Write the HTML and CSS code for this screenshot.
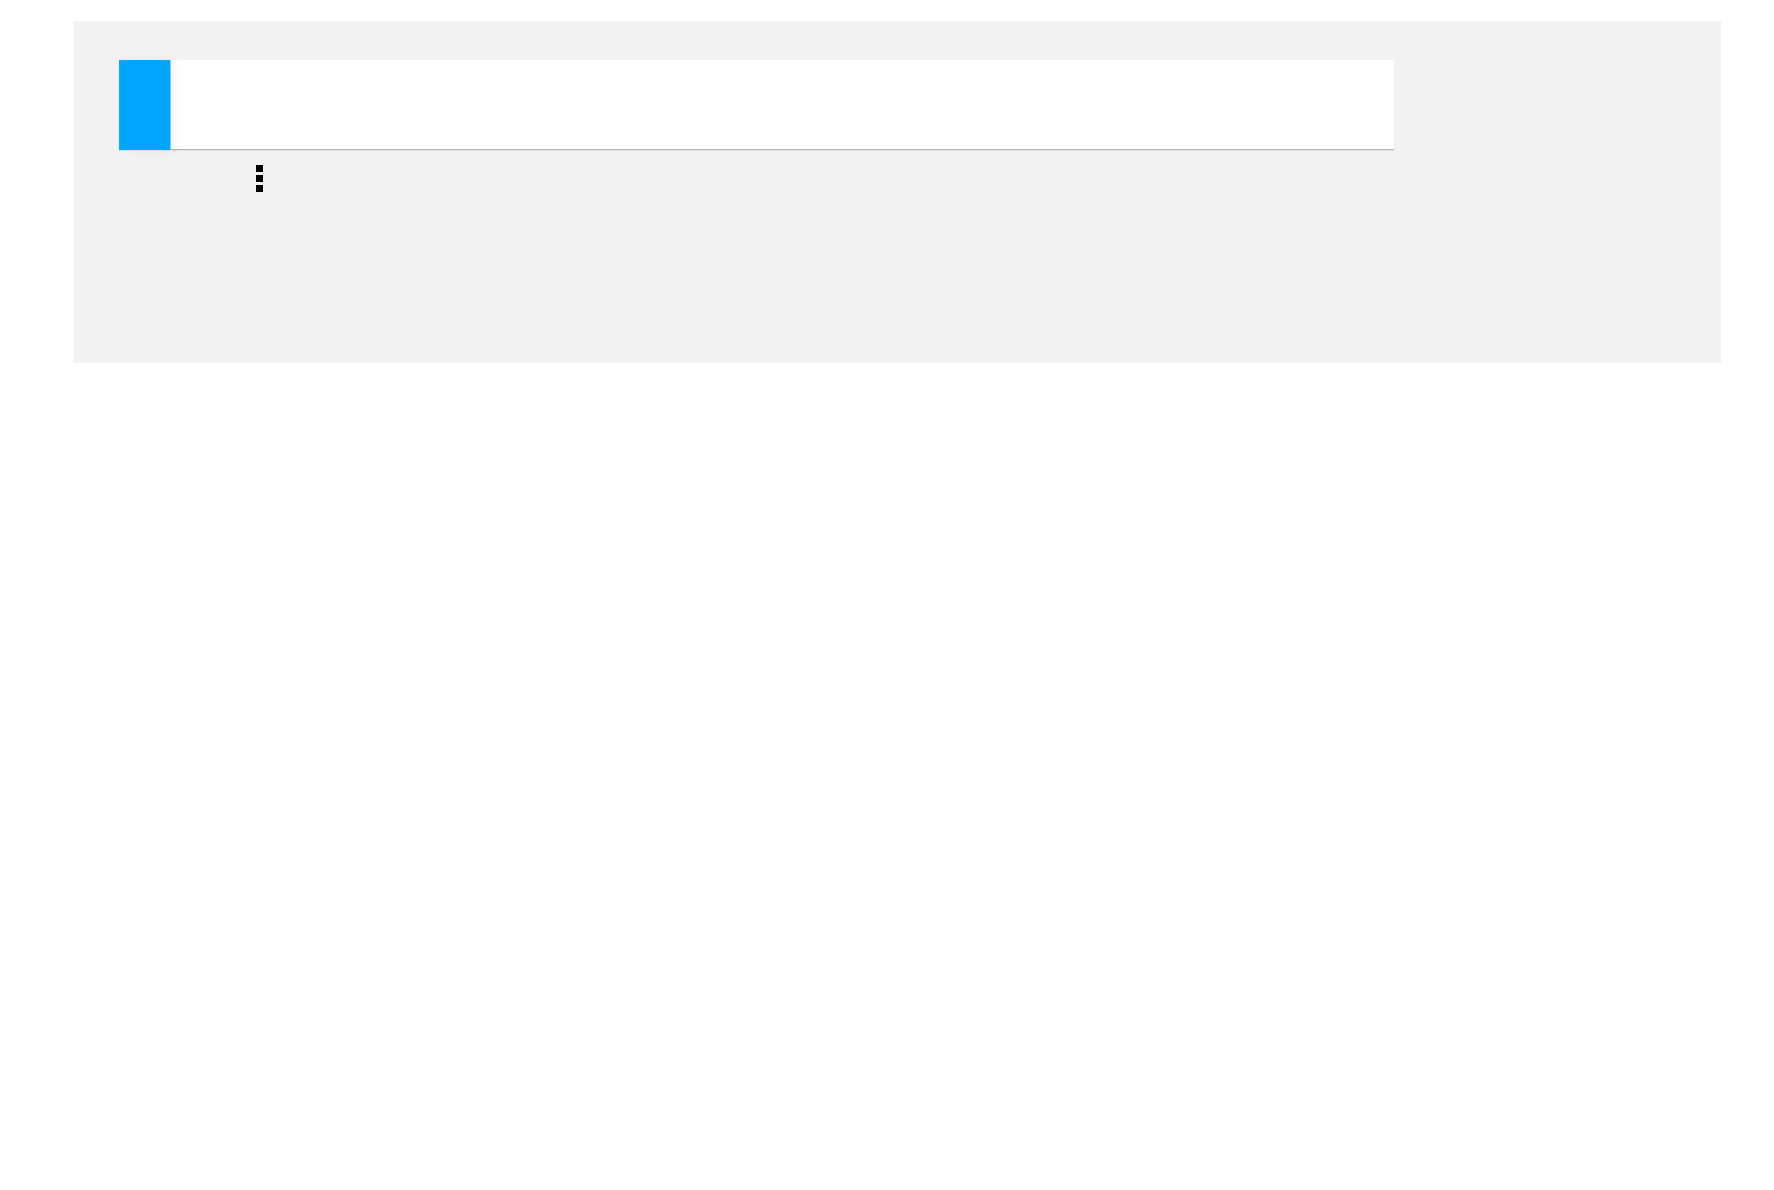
FILE: index.html
```html
<!DOCTYPE html>
<html lang="en">
<head>
  <meta charset="UTF-8" />
  <title>Toolbar</title>
  <link rel="stylesheet" href="styles.css">
</head>

<body>
  <div class="panel">
    <div class="toolbar">
      <div class="toolbar-accent"></div>
      <div class="toolbar-body"></div>
    </div>
    <button class="more-button" aria-label="More">
      <span class="dot"></span>
      <span class="dot"></span>
      <span class="dot"></span>
    </button>
  </div>
</body>
</html>
```

FILE: styles.css
```css
body {
  margin: 0;
  padding: 21px 53px 0 74px;
  background-color: #ffffff;
  font-family: 'Roboto', sans-serif;
}

.panel {
  height: 342px;
  box-sizing: border-box;
  padding: 39px 45px;
  background-color: #f2f2f2;
}

.toolbar {
  display: flex;
  width: 1275px;
  height: 90px;
  background-color: #fff;
  box-shadow: inset 0 -1px 0 #b4b4b4, 0 0.5px 0 #cfcfcf;
}

.toolbar-accent {
  width: 51px;
  background-color: #00a6ff;
  box-shadow: 1px 0 0 #7fd0ff, 4px 0 10px rgba(0, 0, 0, 0.05);
}

.toolbar-body {
  flex: 1;
}

.more-button {
  display: flex;
  flex-direction: column;
  gap: 3px;
  margin: 15px 0 0 137px;
  padding: 0;
  border: none;
  background: none;
  cursor: pointer;
}

.dot {
  width: 7px;
  height: 7px;
  background-color: #000;
}
```
